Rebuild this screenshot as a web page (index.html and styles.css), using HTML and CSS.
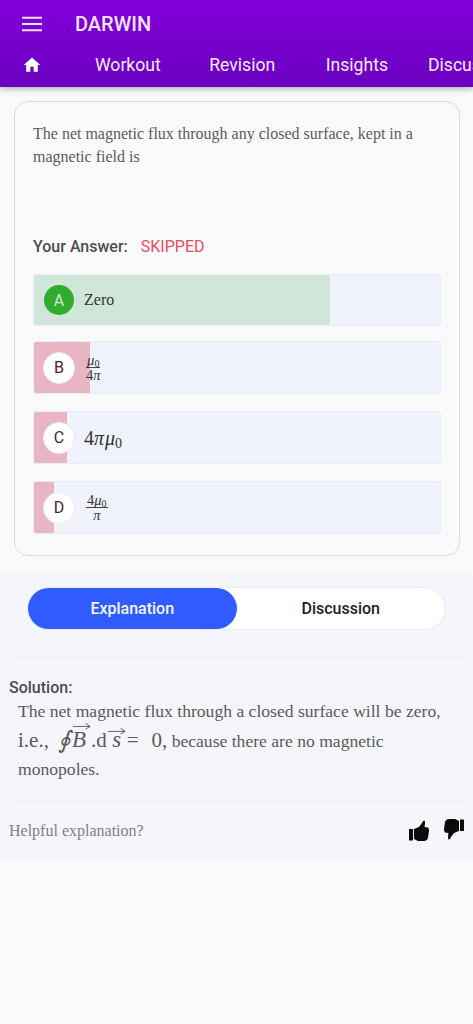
FILE: index.html
```html
<!DOCTYPE html>
<html lang="en">
<head>
<meta charset="utf-8">
<title>Darwin</title>
<link rel="stylesheet" href="styles.css">
</head>
<body>
<header class="appbar">
  <div class="toprow">
    <svg class="menu" viewBox="0 0 22 16" aria-hidden="true"><path d="M0 1.500h21M0 8h21M0 14.500h21" stroke="#f1e4fb" stroke-width="2" fill="none"/></svg>
    <span class="brand">DARWIN</span>
  </div>
  <nav class="tabs">
    <svg class="home" viewBox="0 0 24 24" aria-hidden="true"><path d="M10 20v-6h4v6h5v-8h3L12 3 2 12h3v8z" fill="#fff"/></svg>
    <span class="tab t1">Workout</span>
    <span class="tab t2">Revision</span>
    <span class="tab t3">Insights</span>
    <span class="tab t4">Discussion</span>
  </nav>
</header>
<main>
  <section class="card">
    <p class="question">The net magnetic flux through any closed surface, kept in a magnetic field is</p>
    <div class="answer"><span class="alabel">Your Answer:</span><span class="skipped">SKIPPED</span></div>
    <div class="option o-a">
      <div class="fill green w-a"></div>
      <span class="letter correct">A</span>
      <span class="otext">Zero</span>
    </div>
    <div class="option o-b">
      <div class="fill pink w-b"></div>
      <span class="letter">B</span>
      <span class="frac"><span class="num"><i>μ</i><sub>0</sub></span><span class="den">4<i>π</i></span></span>
    </div>
    <div class="option o-c">
      <div class="fill pink w-c"></div>
      <span class="letter">C</span>
      <span class="otext math">4<i>π</i><i>μ</i><sub>0</sub></span>
    </div>
    <div class="option o-d">
      <div class="fill pink w-d"></div>
      <span class="letter">D</span>
      <span class="frac"><span class="num">4<i>μ</i><sub>0</sub></span><span class="den"><i>π</i></span></span>
    </div>
  </section>
  <section class="panel">
    <div class="switch">
      <span class="seg active">Explanation</span>
      <span class="seg">Discussion</span>
    </div>
    <hr class="rule rule1">
    <div class="sol-label">Solution:</div>
    <div class="sol">
      <p class="l1">The net magnetic flux through a closed surface will be zero,</p>
      <p class="l2"><span class="eq">i.e.,<i class="oint">∮</i><span class="vec vec-b"><i>B</i><svg viewBox="0 0 20 8" aria-hidden="true"><path d="M0 4.500h19M14 1l5 3.500-5 3" fill="none" stroke="#555" stroke-width="1"/></svg></span>.d<span class="vec vec-s"><i>s</i><svg viewBox="0 0 20 8" aria-hidden="true"><path d="M0 4.500h19M14 1l5 3.500-5 3" fill="none" stroke="#555" stroke-width="1"/></svg></span><span class="eqs">=</span><span class="zero">0,</span></span> because there are no magnetic</p>
      <p class="l3">monopoles.</p>
    </div>
    <hr class="rule rule2">
    <div class="helpful">
      <span class="hlabel">Helpful explanation?</span>
      <span class="thumbs">
        <svg viewBox="0 0 20 21" aria-hidden="true"><path d="M0 9h4v11.500H0zM5 9l5-2 3-4q1-3 2.500-2.500 1 1.500 0 6.500L19 7.500q1 .5 1 3.500l-1 7q-1 3-4 3H9l-4-2z"/></svg>
        <svg class="down" viewBox="0 0 20 21" aria-hidden="true"><path d="M0 9h4v11.500H0zM5 9l5-2 3-4q1-3 2.500-2.500 1 1.500 0 6.500L19 7.500q1 .5 1 3.500l-1 7q-1 3-4 3H9l-4-2z"/></svg>
      </span>
    </div>
  </section>
</main>
</body>
</html>
```
FILE: styles.css
```css
* { box-sizing: border-box; }
html, body { margin: 0; padding: 0; }
body {
  width: 473px;
  height: 1024px;
  overflow: hidden;
  background: #fafafa;
  font-family: Roboto, sans-serif;
}
.appbar {
  height: 87px;
  background: linear-gradient(180deg, #8200da 0%, #6a00bf 100%);
  box-shadow: 0 2px 6px rgba(0,0,0,.3);
  overflow: hidden;
  position: relative;
}
.toprow {
  height: 46px;
  display: flex;
  align-items: center;
  padding-left: 22px;
  padding-top: 2px;
}
.menu { width: 21px; height: 16px; flex: none; }
.brand {
  margin-left: 32px;
  color: #f1e4fb;
  font-size: 20px;
  font-weight: 500;
}
.tabs {
  display: flex;
  align-items: center;
  height: 37px;
  padding-left: 22px;
  white-space: nowrap;
  color: #f5ebfc;
  font-size: 17.600px;
}
.home { width: 20px; height: 20px; flex: none; }
.tab { flex: none; }
.t1 { margin-left: 53px; }
.t2 { margin-left: 48.500px; }
.t3 { margin-left: 50.500px; }
.t4 { margin-left: 40px; }
main { display: block; }
.card {
  margin: 14px 13.500px 0 14px;
  height: 455px;
  border: 1px solid #dcdcdc;
  border-radius: 14px;
  padding: 20px 18px 0;
}
.question {
  margin: 0;
  height: 112px;
  font: 16px/23px "Liberation Serif", serif;
  color: #5a5a5a;
}
.answer {
  display: flex;
  height: 24px;
  align-items: center;
  font-size: 16px;
  font-weight: 500;
  margin-bottom: 16px;
}
.alabel { color: #4c4c4c; }
.skipped { color: #e84a5f; margin-left: 13px; font-weight: 400; }
.option {
  position: relative;
  height: 53px;
  width: 408px;
  background: #f0f3fc;
  border: 1px solid #e9edfb;
  border-radius: 3px;
  display: flex;
  align-items: center;
  padding-left: 9px;
  overflow: hidden;
}
.o-a { height: 52px; padding-left: 10px; }
.o-b { margin-top: 15px; }
.o-c { margin-top: 17px; }
.o-d { margin-top: 17px; }
.fill { position: absolute; left: 0; top: 0; bottom: 0; }
.green { background: #cfe6d8; }
.pink { background: #e8b6c3; }
.w-a { width: 296px; }
.w-b { width: 56px; }
.w-c { width: 33px; }
.w-d { width: 20px; }
.letter {
  position: relative;
  flex: none;
  width: 32px;
  height: 32px;
  border-radius: 50%;
  background: #fff;
  border: 1px solid #e9edfb;
  color: #43282f;
  font-size: 16px;
  display: flex;
  align-items: center;
  justify-content: center;
}
.letter.correct { width: 30px; height: 30px; background: #30ad2f; border: 0; color: #cfe6d8; }
.otext {
  position: relative;
  margin-left: 10px;
  font: 16px "Liberation Serif", serif;
  color: #333;
}
.math { font-size: 20px; margin-left: 9px; top: 1px; }
.math i + i { margin-left: 1px; }
.math sub { font-size: 14px; line-height: 0; vertical-align: -3px; }
.frac {
  position: relative;
  margin-left: 11px;
  display: inline-flex;
  flex-direction: column;
  align-items: center;
  font: 14.500px/13px "Liberation Serif", serif;
  color: #333;
}
.num { border-bottom: 1px solid #444; padding: 0 1px; }
.num sub { font-size: 10px; line-height: 0; vertical-align: -2px; }
.den { padding-top: 1px; }
.panel {
  margin-top: 14px;
  height: 290px;
  background: #f5f6fc;
  border-radius: 8px 8px 0 0;
  padding-top: 18px;
}
.switch {
  margin-left: 28px;
  width: 417px;
  height: 41px;
  border-radius: 21px;
  background: #fff;
  box-shadow: 0 0 0 1px #e8edfb;
  display: flex;
  font-size: 16px;
  font-weight: 500;
}
.seg {
  width: 209px;
  display: flex;
  align-items: center;
  justify-content: center;
  color: #1e1e1e;
  border-radius: 21px;
}
.seg.active { background: #305cff; color: #f3f5ff; }
.rule { border: 0; height: 1px; background: #eff0f7; margin: 0 9px; }
.rule1 { margin-top: 27px; }
.sol-label {
  margin: 22px 0 0 9px;
  font-size: 16px;
  font-weight: 500;
  line-height: 18px;
  color: #4c4c4c;
}
.sol {
  padding-left: 18px;
  font: 17.600px "Liberation Serif", serif;
  color: #5a5a5a;
  white-space: nowrap;
}
.sol p { margin: 0; }
.l1 { line-height: 24px; margin-top: 2px !important; }
.l2 { line-height: 35px; }
.l3 { line-height: 20px; }
.eq { font-size: 21px; }
.oint { font-size: 24px; margin: 0 1px 0 9px; vertical-align: -1px; }
.vec { position: relative; display: inline-block; line-height: 1; }
.vec i { font-size: 23px; }
.vec svg { position: absolute; width: 18px; height: 8px; }
.vec-b { width: 19px; }
.vec-b svg { left: 1px; top: -6px; }
.vec-s { width: 18px; margin-left: 1px; text-align: center; }
.vec-s svg { left: 0; top: -1px; }
.eqs { margin-left: 1px; }
.zero { margin-left: 13px; }
.rule2 { margin-top: 21px; }
.helpful {
  display: flex;
  align-items: center;
  justify-content: space-between;
  padding: 0 9px;
  margin-top: 17px;
  height: 26px;
}
.hlabel { font: 16px "Liberation Serif", serif; color: #808080; }
.thumbs { display: flex; gap: 15px; margin-top: -2px; }
.thumbs svg { width: 20px; height: 21px; fill: #0a0a0a; }
.thumbs .down { transform: rotate(180deg) translateY(1px); }
```
